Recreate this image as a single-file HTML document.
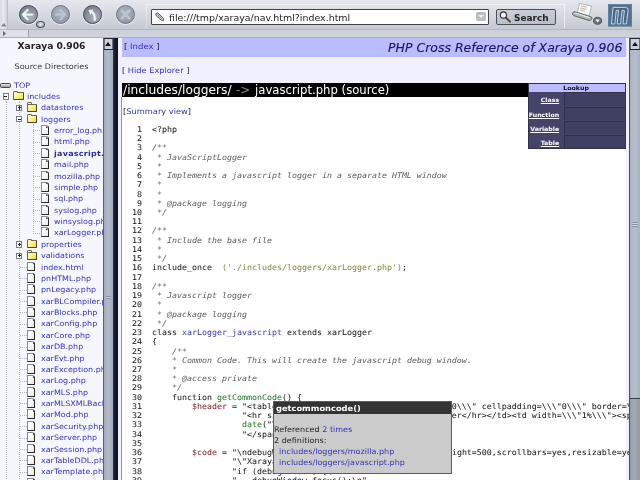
<!DOCTYPE html>
<html><head><meta charset="utf-8"><title>PHP Cross Reference of Xaraya 0.906</title>
<style>
html,body{margin:0;padding:0;}
body{width:640px;height:480px;overflow:hidden;position:relative;background:#f0f0ff;will-change:transform;font-family:"DejaVu Sans","Liberation Sans",sans-serif;font-size:8.1px;color:#222;}
.abs{position:absolute;}
#tb{left:0;top:0;width:640px;height:29px;background:linear-gradient(#e4e7ec 0,#dfe2e8 20%,#cfd3da 70%,#c4c9d1 100%);}
#tb2{left:0;top:29px;width:640px;height:9px;background:linear-gradient(#cbcfd7,#d0d4db);border-top:1px solid #b3b8c1;box-sizing:border-box;}
#topline{left:0;top:36.6px;width:640px;height:1.4px;background:linear-gradient(#c2c7cf,#9399a3);}
#grip{left:0;top:0;width:8px;height:29px;background:linear-gradient(90deg,#d9dce2,#e6e8ec 50%,#cfd3da);border-right:1px solid #b9bec7;box-sizing:border-box;}
#tab2{left:0;top:30px;width:28px;height:7px;background:#dde0e6;border-right:1px solid #9ea4ae;}
.btn{width:19px;height:19px;border-radius:50%;top:5.1px;box-sizing:border-box;}
.btn.on{background:radial-gradient(circle at 62% 68%,#a9b1bc 0,#87919d 50%,#6a7480 100%);border:1.5px solid #414955;box-shadow:0 1px 1px rgba(255,255,255,.7);}
.btn.off{background:radial-gradient(circle at 48% 38%,#adb5c0 0,#99a2ae 55%,#88919e 100%);border:1.3px solid #6b7582;box-shadow:0 1px 1px rgba(255,255,255,.7);}
.btn svg{position:absolute;left:-1.3px;top:-1.3px;width:19px;height:19px;}
#url{left:151px;top:8.5px;width:338px;height:16.4px;background:#fff;border:1.2px solid #3f444c;box-sizing:border-box;border-radius:1px;}
#urltxt{left:168.6px;top:12.1px;font-size:8.86px;line-height:12px;color:#222;white-space:nowrap;transform:scaleX(1.067);transform-origin:0 50%;}
#search{left:496px;top:8.6px;width:59.5px;height:16.2px;background:linear-gradient(#c9ced6,#b9bfc9);border:1px solid #4a505a;box-sizing:border-box;border-radius:2px;}
#searchtxt{left:514.2px;top:11.5px;transform:scaleX(1.065);transform-origin:0 50%;font-size:8.4px;font-weight:bold;line-height:12px;color:#222;}
/* sidebar */
#side{left:0;top:38px;width:103px;height:442px;background:#f6f6ff;overflow:hidden;}
#sb1{left:103px;top:38px;width:10px;height:442px;background:linear-gradient(90deg,#5b606b 0,#5b606b 1px,#a5adbc 1px,#b3bbc9 50%,#a3abba 100%);}
#sb1 .up,#sb2 .up{position:absolute;left:1px;top:0;right:0;height:9.5px;background:#cdd1d9;border-top:1px solid #23272f;border-bottom:1px solid #1c2028;box-shadow:inset 1px 0 0 #6a707a,inset -1px 0 0 #6a707a;}
.up:after{content:"";position:absolute;left:50%;top:2.8px;margin-left:-3.5px;border:3.5px solid transparent;border-top:0;border-bottom:4px solid #111;}
#fb{left:113px;top:38px;width:5px;height:442px;background:linear-gradient(90deg,#2b3350 0,#141a30 40%,#0c1020 100%);}
#sb2{left:629px;top:38px;width:11px;height:442px;background:linear-gradient(90deg,#4c515c 0,#4c515c 1px,#979eab 1px,#a1a8b4 50%,#959ca9 100%);}
#sb2 .th{position:absolute;left:1px;right:0;top:11.5px;height:348px;background:linear-gradient(90deg,#aab2c1,#b7bfcd 50%,#a9b1c0);border-bottom:1px solid #3a3f48;}
h1.s{position:absolute;margin:0;left:0;width:103px;top:2.3px;text-align:center;font-size:8.58px;font-weight:bold;line-height:12px;color:#222;transform:scaleX(1.067);}
.sd{position:absolute;left:0;width:103px;top:22.8px;text-align:center;font-size:7.56px;line-height:11px;color:#333;transform:scaleX(1.067);}
.tr{position:absolute;left:0;width:200px;height:11.4px;white-space:nowrap;}
.tr a{position:absolute;top:0.3px;font-size:7.4px;line-height:11px;color:#3333bb;transform:scaleX(1.08);transform-origin:0 50%;}
.tr a.b{font-weight:bold;color:#2a2aa8;letter-spacing:0.25px;}
.fold{position:absolute;top:1.6px;width:10.7px;height:8px;background:linear-gradient(135deg,#fffbd0 0,#fbf08e 50%,#ecd94e 100%);border:1px solid #6e6a40;border-bottom-color:#4a462a;border-right-color:#4a462a;border-radius:1px;box-sizing:border-box;}
.fold:before{content:"";position:absolute;left:-1px;top:-2.4px;width:5px;height:2px;background:#fbf3a0;border:1px solid #6e6a40;border-bottom:0;border-radius:1.5px 1.5px 0 0;box-sizing:border-box;}
.doc{position:absolute;top:0.3px;width:8.3px;height:9.8px;background:linear-gradient(135deg,#fff 30%,#e9e9dc);border:1px solid #8a8a8a;border-bottom-color:#2a2a2a;border-right-color:#2a2a2a;box-sizing:border-box;border-radius:0 3px 0 0;}.doc:after{content:"";position:absolute;right:-0.5px;top:-0.5px;border:1.4px solid #444;border-top-color:transparent;border-right-color:transparent;}
.pm{position:absolute;top:2.8px;width:6.2px;height:6.2px;border:1px solid #7c7c88;background:#fff;box-sizing:border-box;}
.pm:before{content:"";position:absolute;left:0.5px;right:0.5px;top:1.5px;height:1px;background:#222;}
.pm b{position:absolute;left:1.5px;top:0.5px;bottom:0.5px;width:1px;background:#222;}
.hl{position:absolute;top:5.6px;width:7px;height:0;border-top:1px dotted #b2b2c4;}.vl{position:absolute;width:0;border-left:1px dotted #b2b2c4;}
.drv{position:absolute;top:3.4px;width:10.6px;height:5.8px;background:linear-gradient(#e8e8e8,#9a9a9a);border:1px solid #444;border-radius:1.5px;box-sizing:border-box;}
/* main */
#hdr{left:122px;top:38px;width:503.5px;height:18.8px;background:#bbbbff;}
#idx{left:123.9px;top:41.1px;transform:scaleX(1.103);transform-origin:0 50%;font-size:7.75px;line-height:11px;color:#222;white-space:pre;}
a{color:#3333bb;text-decoration:none;}
#ttl{left:388.3px;top:40px;-webkit-text-stroke:0.15px;transform:scaleX(1.086);transform-origin:0 50%;font-size:11.5px;font-style:italic;line-height:16px;color:#1a1a55;white-space:nowrap;}
#hide{left:121.7px;top:65.4px;transform:scaleX(1.067);transform-origin:0 50%;font-size:7.73px;line-height:11px;white-space:pre;}
#bar{left:122px;top:83px;width:406px;height:14px;background:#000;}
#bartxt,.bt2{left:122.6px;top:82.8px;font-size:11.5px;line-height:15px;color:#fff;white-space:pre;transform:scaleX(1.035);transform-origin:0 50%;}#bartxt{transform:scaleX(1.066)}
#codebox{left:121px;top:97px;width:505px;height:383px;background:#fff;border-left:1.5px solid #8e93a0;box-sizing:border-box;}
#sum{left:122.6px;top:106.3px;transform:scaleX(1.067);transform-origin:0 50%;font-size:7.76px;line-height:11px;white-space:pre;}
pre{position:absolute;margin:0;left:117px;top:124.9px;font-family:"DejaVu Sans Mono","Liberation Mono",monospace;font-size:7.8px;line-height:9.24px;color:#222;transform:scaleX(1.0647);transform-origin:0 0;-webkit-text-stroke:0.05px;}
pre i.cm{color:#5c5c5c;font-style:italic;-webkit-text-stroke:0;}
.va{color:#822e2e;}
.fn{color:#287a2e;}
.cl{color:#4646aa;}
.in{color:#8a8a4a;}
/* lookup */
#lk{left:528px;top:83.2px;width:97.5px;height:65.8px;background:#44446a;border:1px solid #33334d;box-sizing:border-box;}
#lk .h{position:absolute;left:0;top:0;width:100%;height:8.2px;background:#bbbbff;text-align:center;font-size:5.86px;line-height:8.4px;font-weight:bold;color:#111;}#lk .h span{display:inline-block;transform:scaleX(1.067);position:relative;left:-1px}
#lk .r{position:absolute;left:0;width:30.2px;text-align:right;font-size:5.86px;font-weight:bold;line-height:10px;color:#fff;text-decoration:underline;transform:scaleX(1.067);transform-origin:100% 50%;}
#lk .c{position:absolute;left:34.5px;right:0;height:13.4px;background:#404062;border-top:1px solid #30304a;border-left:1px solid #30304a;box-sizing:border-box;}
/* popup */
#pop{left:273px;top:401px;width:179px;height:73.3px;background:#cbcbcb;border:1px solid #5c5c5c;box-sizing:border-box;}
#pop .t{position:absolute;left:0;top:0;right:0;height:12.3px;background:#333;color:#fff;font-weight:bold;font-size:7.78px;line-height:14.4px;padding-left:1.5px;overflow:hidden}#pop .t span{display:inline-block;transform:scaleX(1.067);transform-origin:0 50%}
#pop div.l{position:absolute;left:-0.5px;transform:scaleX(1.047);transform-origin:0 50%;font-size:7.69px;line-height:11px;color:#222;white-space:pre;}
#wrap{position:absolute;left:-6px;top:-6px;width:652px;height:492px;background:#f0f0ff;filter:blur(0.4px);}
#in{position:absolute;left:6px;top:6px;width:640px;height:480px;}
</style></head><body><div id="wrap"><div id="in">
<div id="tb" class="abs"></div>
<div id="tb2" class="abs"></div>
<div id="grip" class="abs"></div>
<div id="tab2" class="abs"></div>
<div class="abs btn on" style="left:18.6px"><svg viewBox="0 0 19 19"><path d="M14.3 9.6 H6 M9.6 5 L5 9.6 L9.6 14.2" stroke="#eef1f4" stroke-width="2.3" stroke-linecap="round" stroke-linejoin="round" fill="none"/></svg></div>
<div class="abs" style="left:36px;top:20.9px;width:8.5px;height:6.8px;border-radius:50%;background:radial-gradient(circle at 50% 45%,#eef0f3 0,#c5cad1 45%,#7a838e 100%);border:1.5px solid #4a525c;box-sizing:border-box"></div>
<div class="abs btn off" style="left:51.4px"><svg viewBox="0 0 19 19"><path d="M4.7 9.6 H13 M9.4 5 L14 9.6 L9.4 14.2" stroke="#bcc4cd" stroke-width="2.3" stroke-linecap="round" stroke-linejoin="round" fill="none"/></svg></div>
<div class="abs btn on" style="left:83.1px"><svg viewBox="0 0 19 19"><path d="M11.8 15 C12 11 11.3 7.6 7.6 6.4" stroke="#eef1f4" stroke-width="2.2" stroke-linecap="round" fill="none"/><path d="M5.6 5 L10.4 4.6 L7.4 10 Z" fill="#eef1f4"/></svg></div>
<div class="abs btn off" style="left:116.1px"><svg viewBox="0 0 19 19"><path d="M5.7 5.7 L13.3 13.3 M13.3 5.7 L5.7 13.3" stroke="#bcc4cd" stroke-width="2.8" stroke-linecap="round" fill="none"/></svg></div>
<div id="url" class="abs"></div>
<div id="urltxt" class="abs">file:///tmp/xaraya/nav.html?index.html</div>
<div id="search" class="abs"></div>
<div id="searchtxt" class="abs">Search</div>
<div id="topline" class="abs"></div>
<div class="abs" style="left:476px;top:12.2px;width:9.7px;height:8.4px;border-radius:2px;background:#b9bdc4"></div>
<div class="abs" style="left:477.9px;top:15px;border:3px solid transparent;border-top:3.6px solid #eceef1;border-bottom:0"></div>
<svg class="abs" style="left:154px;top:11px" width="12" height="12" viewBox="0 0 12 12"><path d="M1.8 2.6 L3.8 1.8 L9.8 7.6 L9.4 9.8 L7.4 9.4 L2 4.4 Z" fill="#c4c7cd" stroke="#50545c" stroke-width="0.9"/><path d="M3.4 3.4 L8.4 8.2" stroke="#7a7e86" stroke-width="0.8"/></svg>
<svg class="abs" style="left:498px;top:9.5px" width="16" height="14" viewBox="0 0 16 14"><path d="M7.6 7.4 L12 11.6" stroke="#5a3a30" stroke-width="2" stroke-linecap="round"/><circle cx="5.4" cy="5" r="3.1" fill="#f2f4f6" stroke="#2c3038" stroke-width="1.1"/></svg>
<svg class="abs" style="left:570px;top:1px" width="36" height="28" viewBox="0 0 36 28"><path d="M9.5 2.5 L21.5 5 L19 15 L7.5 11.5 Z" fill="#fafaf6" stroke="#9a9e9a" stroke-width="0.7"/><path d="M11 5 l6 1.3 M10.5 7 l6 1.4 M10 9 l5 1.2" stroke="#b0a090" stroke-width="0.8"/><path d="M4 10.5 L21 15.8 Q22.8 16.6 21.6 18.2 L20.6 19.2 Q19.6 19.8 18 19.2 L3.6 14.6 Q2 13.8 2.6 12.2 Z" fill="#a9b4ac" stroke="#56605c" stroke-width="0.9"/><path d="M5 12 L19.5 16.6" stroke="#e6ece6" stroke-width="1.2"/><ellipse cx="27.6" cy="19.8" rx="4.1" ry="3.5" fill="#69727d" stroke="#4a525c" stroke-width="0.9"/><path d="M25.4 18.6 H29.8 L27.6 21.4 Z" fill="#f4f6f8"/></svg>
<svg class="abs" style="left:608.1px;top:4.1px" width="24.1" height="22.5" viewBox="0 0 24.1 22.5"><rect width="24.1" height="22.5" fill="#54708c"/><rect x="0.4" y="0.4" width="23.3" height="21.7" fill="none" stroke="#6a86a2" stroke-width="0.8"/><path d="M5.1 3.4 H17.4 Q20.4 3.4 20.1 6.4 L18.4 19.9 H15 L16.39 6.4 H13.99 L12.6 19.9 H9.2 L10.59 6.4 H8.19 L6.8 19.9 H3.4 Z" fill="#4a6683" stroke="#cde2f3" stroke-width="0.9" stroke-linejoin="round"/></svg>
<svg class="abs" style="left:1px;top:22.6px" width="6" height="4"><path d="M0 3.6 L2.8 0 L5.6 3.6 Z" fill="#7f858f"/></svg>
<svg class="abs" style="left:3.4px;top:30.8px" width="4" height="6"><path d="M0 0 L3 2.6 L0 5.2 Z" fill="#666c76"/></svg>
<div class="abs" style="left:146px;top:3.8px;width:418px;height:1px;background:rgba(255,255,255,.45)"></div>
<div class="abs" style="left:563.5px;top:4px;width:1px;height:24px;background:rgba(255,255,255,.55)"></div>
<div class="abs" style="left:145.5px;top:4px;width:1px;height:24px;background:rgba(255,255,255,.3)"></div>

<div id="side" class="abs">
<h1 class="s">Xaraya 0.906</h1>
<div class="sd">Source Directories</div>
<div class="abs" style="left:0;top:-38px">
<div class="vl" style="left:5.6px;top:101px;height:380px"></div><div class="vl" style="left:19.3px;top:101px;height:380px"></div><div class="vl" style="left:33px;top:124px;height:108px"></div>
<div class="tr" style="top:79.30px"><span class="drv" style="left:0.3px"></span><a style="left:14px">TOP</a></div>
<div class="tr" style="top:90.67px"><span class="fold" style="left:13.0px"></span><span class="pm" style="left:2.5px"></span><a style="left:27.2px">includes</a></div>
<div class="tr" style="top:102.05px"><span class="fold" style="left:26.6px"></span><span class="pm" style="left:16.1px"><b></b></span><a style="left:40.8px">datastores</a></div>
<div class="tr" style="top:113.42px"><span class="fold" style="left:26.6px"></span><span class="pm" style="left:16.1px"></span><a style="left:40.8px">loggers</a></div>
<div class="tr" style="top:124.80px"><span class="doc" style="left:40.6px"></span><span class="hl" style="left:33.2px"></span><a style="left:54.4px">error_log.php</a></div>
<div class="tr" style="top:136.18px"><span class="doc" style="left:40.6px"></span><span class="hl" style="left:33.2px"></span><a style="left:54.4px">html.php</a></div>
<div class="tr" style="top:147.55px"><span class="doc" style="left:40.6px"></span><span class="hl" style="left:33.2px"></span><a class="b" style="left:54.4px">javascript.php</a></div>
<div class="tr" style="top:158.93px"><span class="doc" style="left:40.6px"></span><span class="hl" style="left:33.2px"></span><a style="left:54.4px">mail.php</a></div>
<div class="tr" style="top:170.30px"><span class="doc" style="left:40.6px"></span><span class="hl" style="left:33.2px"></span><a style="left:54.4px">mozilla.php</a></div>
<div class="tr" style="top:181.68px"><span class="doc" style="left:40.6px"></span><span class="hl" style="left:33.2px"></span><a style="left:54.4px">simple.php</a></div>
<div class="tr" style="top:193.05px"><span class="doc" style="left:40.6px"></span><span class="hl" style="left:33.2px"></span><a style="left:54.4px">sql.php</a></div>
<div class="tr" style="top:204.43px"><span class="doc" style="left:40.6px"></span><span class="hl" style="left:33.2px"></span><a style="left:54.4px">syslog.php</a></div>
<div class="tr" style="top:215.80px"><span class="doc" style="left:40.6px"></span><span class="hl" style="left:33.2px"></span><a style="left:54.4px">winsyslog.php</a></div>
<div class="tr" style="top:227.18px"><span class="doc" style="left:40.6px"></span><span class="hl" style="left:33.2px"></span><a style="left:54.4px">xarLogger.php</a></div>
<div class="tr" style="top:238.55px"><span class="fold" style="left:26.6px"></span><span class="pm" style="left:16.1px"><b></b></span><a style="left:40.8px">properties</a></div>
<div class="tr" style="top:249.93px"><span class="fold" style="left:26.6px"></span><span class="pm" style="left:16.1px"><b></b></span><a style="left:40.8px">validations</a></div>
<div class="tr" style="top:261.30px"><span class="doc" style="left:27.0px"></span><span class="hl" style="left:19.6px"></span><a style="left:40.8px">index.html</a></div>
<div class="tr" style="top:272.68px"><span class="doc" style="left:27.0px"></span><span class="hl" style="left:19.6px"></span><a style="left:40.8px">pnHTML.php</a></div>
<div class="tr" style="top:284.05px"><span class="doc" style="left:27.0px"></span><span class="hl" style="left:19.6px"></span><a style="left:40.8px">pnLegacy.php</a></div>
<div class="tr" style="top:295.43px"><span class="doc" style="left:27.0px"></span><span class="hl" style="left:19.6px"></span><a style="left:40.8px">xarBLCompiler.php</a></div>
<div class="tr" style="top:306.80px"><span class="doc" style="left:27.0px"></span><span class="hl" style="left:19.6px"></span><a style="left:40.8px">xarBlocks.php</a></div>
<div class="tr" style="top:318.18px"><span class="doc" style="left:27.0px"></span><span class="hl" style="left:19.6px"></span><a style="left:40.8px">xarConfig.php</a></div>
<div class="tr" style="top:329.55px"><span class="doc" style="left:27.0px"></span><span class="hl" style="left:19.6px"></span><a style="left:40.8px">xarCore.php</a></div>
<div class="tr" style="top:340.93px"><span class="doc" style="left:27.0px"></span><span class="hl" style="left:19.6px"></span><a style="left:40.8px">xarDB.php</a></div>
<div class="tr" style="top:352.30px"><span class="doc" style="left:27.0px"></span><span class="hl" style="left:19.6px"></span><a style="left:40.8px">xarEvt.php</a></div>
<div class="tr" style="top:363.68px"><span class="doc" style="left:27.0px"></span><span class="hl" style="left:19.6px"></span><a style="left:40.8px">xarException.php</a></div>
<div class="tr" style="top:375.05px"><span class="doc" style="left:27.0px"></span><span class="hl" style="left:19.6px"></span><a style="left:40.8px">xarLog.php</a></div>
<div class="tr" style="top:386.43px"><span class="doc" style="left:27.0px"></span><span class="hl" style="left:19.6px"></span><a style="left:40.8px">xarMLS.php</a></div>
<div class="tr" style="top:397.80px"><span class="doc" style="left:27.0px"></span><span class="hl" style="left:19.6px"></span><a style="left:40.8px">xarMLSXMLBackend.php</a></div>
<div class="tr" style="top:409.18px"><span class="doc" style="left:27.0px"></span><span class="hl" style="left:19.6px"></span><a style="left:40.8px">xarMod.php</a></div>
<div class="tr" style="top:420.55px"><span class="doc" style="left:27.0px"></span><span class="hl" style="left:19.6px"></span><a style="left:40.8px">xarSecurity.php</a></div>
<div class="tr" style="top:431.93px"><span class="doc" style="left:27.0px"></span><span class="hl" style="left:19.6px"></span><a style="left:40.8px">xarServer.php</a></div>
<div class="tr" style="top:443.30px"><span class="doc" style="left:27.0px"></span><span class="hl" style="left:19.6px"></span><a style="left:40.8px">xarSession.php</a></div>
<div class="tr" style="top:454.68px"><span class="doc" style="left:27.0px"></span><span class="hl" style="left:19.6px"></span><a style="left:40.8px">xarTableDDL.php</a></div>
<div class="tr" style="top:466.05px"><span class="doc" style="left:27.0px"></span><span class="hl" style="left:19.6px"></span><a style="left:40.8px">xarTemplate.php</a></div>
<div class="tr" style="top:477.43px"><span class="doc" style="left:27.0px"></span><span class="hl" style="left:19.6px"></span><a style="left:40.8px">xarTheme.php</a></div>
</div>
</div>
<div id="sb1" class="abs"><div class="up"></div></div>
<div id="fb" class="abs"></div>
<div class="abs" style="left:106px;top:295.6px;width:5px;height:3.4px;background:linear-gradient(#8a92a2 0,#8a92a2 33%,#c8ced8 33%,#c8ced8 66%,#8a92a2 66%)"></div>

<div id="hdr" class="abs"></div>
<div id="idx" class="abs">[ <a>Index</a> ]</div>
<div id="ttl" class="abs">PHP Cross Reference of Xaraya 0.906</div>
<div id="hide" class="abs">[ <a>Hide Explorer</a> ]</div>
<div id="codebox" class="abs"></div>
<div id="bar" class="abs"></div>
<div id="bartxt" class="abs">/includes/loggers/</div><div class="abs bt2" style="left:236.2px;color:#8c8c8c">-&gt;</div><div class="abs bt2" style="left:254.6px;transform:scaleX(1.0145)">javascript.php (source)</div>
<div id="sum" class="abs">[<a>Summary view</a>]</div>
<pre>    1  &lt;?php
    2  
    3  <i class="cm">/**</i>
    4  <i class="cm"> * JavaScriptLogger</i>
    5  <i class="cm"> *</i>
    6  <i class="cm"> * Implements a javascript logger in a separate HTML window</i>
    7  <i class="cm"> *</i>
    8  <i class="cm"> *</i>
    9  <i class="cm"> * @package logging</i>
   10  <i class="cm"> */</i>
   11  
   12  <i class="cm">/**</i>
   13  <i class="cm"> * Include the base file</i>
   14  <i class="cm"> *</i>
   15  <i class="cm"> */</i>
   16  include_once  <span class="in">(&#x27;./includes/loggers/xarLogger.php&#x27;)</span>;
   17  
   18  <i class="cm">/**</i>
   19  <i class="cm"> * Javascript logger</i>
   20  <i class="cm"> *</i>
   21  <i class="cm"> * @package logging</i>
   22  <i class="cm"> */</i>
   23  class <span class="cl">xarLogger_javascript</span> extends xarLogger
   24  {
   25      <i class="cm">/**</i>
   26      <i class="cm">* Common Code. This will create the javascript debug window.</i>
   27      <i class="cm">*</i>
   28      <i class="cm">* @access private</i>
   29      <i class="cm">*/</i>
   30      function <span class="fn">getCommonCode</span>() {
   31          <span class="va">$header</span> = &quot;&lt;table size=\\\&quot;100%\\\&quot; cellspacing=\\\&quot;0\\\&quot; cellpadding=\\\&quot;0\\\&quot; border=\\\&quot;0\\\&quot;&gt;&lt;tr&gt;&lt;td&gt;&quot;.
   32                    &quot;&lt;hr size=\\\&quot;1\\\&quot;&gt;Xaraya Javascript Logger&lt;/hr&gt;&lt;/td&gt;&lt;td width=\\\&quot;1%\\\&quot;&gt;&lt;span style=\\\&quot;font-size
   33                    <span class="fn">date</span>(&quot;Y-m-d H:i:s&quot;).
   34                    &quot;&lt;/span&gt;&lt;/td&gt;&lt;/tr&gt;&lt;/table&gt;&quot;;
   35  
   36          <span class="va">$code</span> = &quot;\ndebugWindow = window.open(\&quot;\&quot;,\&quot;Xa\&quot;,\&quot;wight=500,scrollbars=yes,resizable=yes\&quot;);\n&quot;.
   37                  &quot;\&quot;Xaraya Javascript Logger\&quot;.
   38                  &quot;if (debugWindow) {\n&quot;.
   39                  &quot;   debugWindow.focus();\n&quot;.
   40                  &quot;   debugWindow.document.write();&quot;</pre>
<div id="lk" class="abs"><div class="h"><span>Lookup</span></div>
<div class="c" style="top:8.2px"></div><div class="c" style="top:22.4px"></div><div class="c" style="top:36.6px"></div><div class="c" style="top:50.8px"></div>
<span class="r" style="top:11.3px">Class</span><span class="r" style="top:25.4px">Function</span><span class="r" style="top:39.6px">Variable</span><span class="r" style="top:53.7px">Table</span>
</div>
<div id="pop" class="abs"><div class="t"><span>getcommoncode()</span></div>
<div class="l" style="top:22.3px">Referenced <a>2 times</a></div>
<div class="l" style="top:33px">2 definitions:</div>
<div class="l" style="top:43.9px">  <a>includes/loggers/mozilla.php</a></div>
<div class="l" style="top:54.5px">  <a>includes/loggers/javascript.php</a></div>
</div>
<div id="sb2" class="abs"><div class="up"></div><div class="th"></div></div>
<div class="abs" style="left:632px;top:221.5px;width:5.5px;height:5.4px;background:linear-gradient(#8a92a2 0,#8a92a2 20%,#cdd3dc 20%,#cdd3dc 40%,#8a92a2 40%,#8a92a2 60%,#cdd3dc 60%,#cdd3dc 80%,#8a92a2 80%)"></div>
</div></div></body></html>
